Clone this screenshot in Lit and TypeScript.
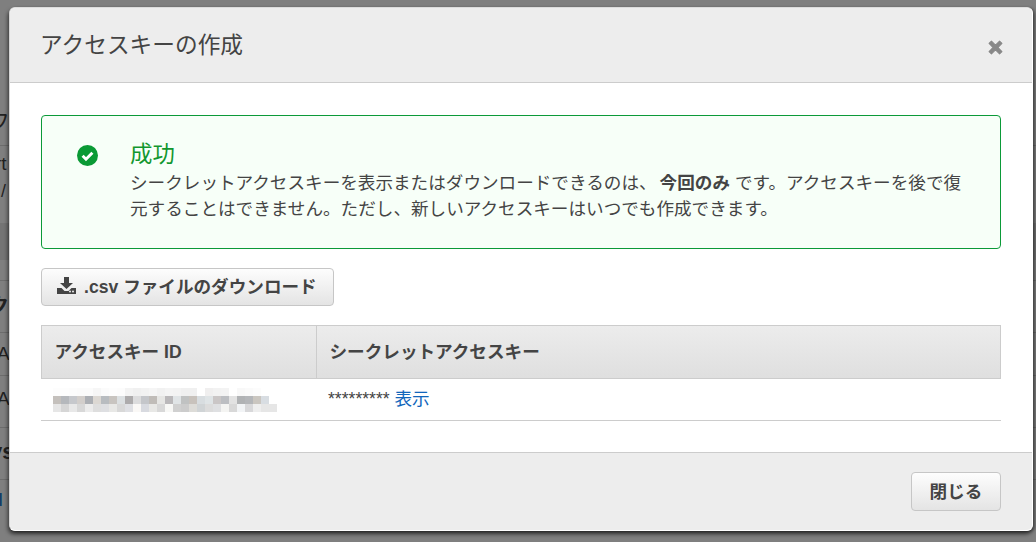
import { LitElement, html, css } from "lit";
import { customElement } from "lit/decorators.js";

const blur = [
  ["#fdfdfd","#fdfdfd","#fcfcfc","#fbfbfb","#fbfbfb","#f6f6f6","#fbfbfb","#fdfdfd","#fcfcfc","#f3f3f3","#f0f0f0","#f2f2f2","#f5f5f5","#f1f1f1","#f4f4f4","#f3f3f3","#f0f0f0","#f0f0f0","#ffffff","#f0efef","#f2f2f2","#f3f3f3","#ffffff","#f8f8f8","#fafafa","#fcfcfc","#ffffff","#ffffff"],
  ["#c4c0bc","#b5b8bc","#c6c8cc","#d2cecb","#acafb4","#dcd8d3","#b8bcc0","#c8c4c0","#dce0e2","#adabac","#dcdcdd","#c4c6ca","#c0bcb8","#e6e6e4","#bab8ba","#e0e4e6","#c0c2c2","#c8c2bc","#d8dde0","#dfe4e6","#cac6c6","#bcbec2","#e2e2e2","#b0b2b4","#b4b6b9","#cac6c0","#d8dde2","#ffffff"],
  ["#e6e6e6","#d6d6d6","#e8e8e8","#d8d8d8","#ececec","#dedede","#dedfe2","#e8e8e6","#d8d8d8","#dfe0e4","#faf8f6","#d8dae0","#e8e8e6","#d8d8d8","#f8f8f6","#d0d0d0","#cccccc","#dddcd8","#d0d4d6","#dcdcdc","#dfe0e2","#f4f4f2","#d8d8d8","#f2f4f6","#d8d8da","#eeeeee","#e6e6e6","#e6e6e6"],
];

const lines = [145, 280, 332, 375, 427, 479];
const bgText = [
  { t: "フ", x: -12, y: 111, s: 22, c: "#222", w: 400 },
  { t: "rt", x: -5, y: 153, s: 19, c: "#222", w: 400 },
  { t: "/", x: 1, y: 180, s: 17.6, c: "#222", w: 400 },
  { t: "ク", x: -11, y: 295, s: 20, c: "#222", w: 700 },
  { t: "KIA", x: -21, y: 343, s: 19, c: "#222", w: 400 },
  { t: "KIA", x: -21, y: 388, s: 19, c: "#222", w: 400 },
  { t: "ys", x: -10, y: 441, s: 22, c: "#222", w: 700 },
  { t: "I ,", x: -2, y: 489, s: 19, c: "#0b3a66", w: 400 },
];

@customElement("app-root")
export class AppRoot extends LitElement {
  static styles = css`
    :host { display: block; width: 1036px; height: 542px; position: relative; overflow: hidden; background: #7f7f7f;
      font-family: "Liberation Sans", "Noto Sans CJK JP", sans-serif; color: #444; font-size: 17.6px; }
    .line { position: absolute; left: 0; right: 0; height: 1px; background: #6c6c6c; }
    .band { position: absolute; left: 0; right: 0; top: 223px; height: 37px; background: #747474; }
    .bgt { position: absolute; line-height: 22px; white-space: nowrap; }
    .modal { position: absolute; left: 9px; top: 7px; width: 1024px; height: 524px; box-sizing: border-box;
      background: #fff; border-radius: 6px; border: 1px solid #fff; border-left-color: #d4d4d4; border-top-color: #dcdcdc;
      display: flex; flex-direction: column;
      box-shadow: -1px 3px 4px rgba(0,0,0,.6), 2px 1px 3px rgba(0,0,0,.35); overflow: hidden; }
    header { height: 75px; flex: none; box-sizing: border-box; background: #ededed; border-bottom: 1px solid #ccc; padding: 21px 29px 0 30px; display: flex; justify-content: space-between; }
    h2 { margin: 0; font-size: 22.7px; line-height: 32px; font-weight: 400; color: #444; }
    .x { margin-top: 11px; width: 15px; height: 15px; }
    main { flex: 1; padding: 32px 31px 0; }
    .alert { height: 134px; box-sizing: border-box; border: 1px solid #0b9a38; border-radius: 4px; background: #f7fff8; display: flex; padding: 24px 24px 0 35px; }
    .ok { width: 21px; height: 21px; margin: 5px 32px 0 0; flex: none; }
    .alert h3 { margin: 0; font-size: 22.4px; line-height: 30px; font-weight: 400; color: #12972f; }
    .alert p { margin: 0; line-height: 26px; color: #444; }
    .alert b { margin: 0 5px 0 3px; }
    button { font: inherit; font-weight: 700; color: #444; border: 1px solid #c6c6c6; border-radius: 4px;
      background: linear-gradient(#fdfdfd, #e4e4e4); box-sizing: border-box; display: flex; align-items: center; padding: 0; }
    .dl { margin-top: 19px; width: 293px; height: 38px; padding: 0 0 3px 15px; gap: 8px; }
    .dl svg { width: 19px; height: 17px; flex: none; }
    .table { margin-top: 19px; }
    .row { display: grid; grid-template-columns: 274px 1fr; }
    .head { height: 54px; box-sizing: border-box; border: 1px solid #ccc; background: linear-gradient(#ececec, #dfdfdf); font-weight: 700; }
    .head > div { padding: 0 0 3px 12.5px; display: flex; align-items: center; }
    .head > div + div { border-left: 1px solid #ccc; }
    .body { height: 42px; box-sizing: border-box; border-bottom: 1px solid #ccc; align-items: center; }
    .blur { display: grid; grid-template-columns: repeat(28, 8px); grid-auto-rows: 8px; margin-left: 12px; }
    .blur i { display: block; }
    .secret { padding: 0 0 4px 13px; }
    a { color: #1166bb; text-decoration: none; }
    footer { height: 78px; flex: none; box-sizing: border-box; background: #ededed; border-top: 1px solid #ccc; display: flex; justify-content: flex-end; align-items: flex-start; padding: 19px 31px 0 0; }
    .close { width: 90px; height: 39px; justify-content: center; padding-bottom: 3px; }
  `;
  render() {
    return html`
      <div class="band"></div>
      ${lines.map(y => html`<div class="line" style="top:${y}px"></div>`)}
      ${bgText.map(b => html`<div class="bgt" style="left:${b.x}px;top:${b.y}px;font-size:${b.s}px;color:${b.c};font-weight:${b.w}">${b.t}</div>`)}
      <div class="modal">
        <header>
          <h2>アクセスキーの作成</h2>
          <svg class="x" viewBox="0 0 14 14"><path d="M3.2 1 7 4.8 10.8 1 13 3.2 9.2 7 13 10.8 10.8 13 7 9.2 3.2 13 1 10.8 4.8 7 1 3.2z" fill="#888" stroke="#888" stroke-linejoin="round"/></svg>
        </header>
        <main>
          <div class="alert">
            <svg class="ok" viewBox="0 0 21 21"><circle cx="10.5" cy="10.5" r="10.5" fill="#0a9a35"/><path d="m5.6 10.8 3.4 3.4 6.4-6.4" fill="none" stroke="#fff" stroke-width="3"/></svg>
            <div>
              <h3>成功</h3>
              <p>シークレットアクセスキーを表示またはダウンロードできるのは、<b>今回のみ</b>です。アクセスキーを後で復<br>元することはできません。ただし、新しいアクセスキーはいつでも作成できます。</p>
            </div>
          </div>
          <button class="dl">
            <svg viewBox="0 0 19 17"><path fill="#444" d="M7 0h5v6h4l-6.5 6L3 6h4zM0 11h4.5l3 3h4l3-3H19v6H0z"/><circle cx="13" cy="14.5" r="1" fill="#eee"/><circle cx="16" cy="14.5" r="1" fill="#eee"/></svg>
            .csv ファイルのダウンロード
          </button>
          <div class="table">
            <div class="row head"><div>アクセスキー ID</div><div>シークレットアクセスキー</div></div>
            <div class="row body">
              <div class="blur">${blur.flat().map(c => html`<i style="background:${c}"></i>`)}</div>
              <div class="secret">********* <a>表示</a></div>
            </div>
          </div>
        </main>
        <footer><button class="close">閉じる</button></footer>
      </div>`;
  }
}
